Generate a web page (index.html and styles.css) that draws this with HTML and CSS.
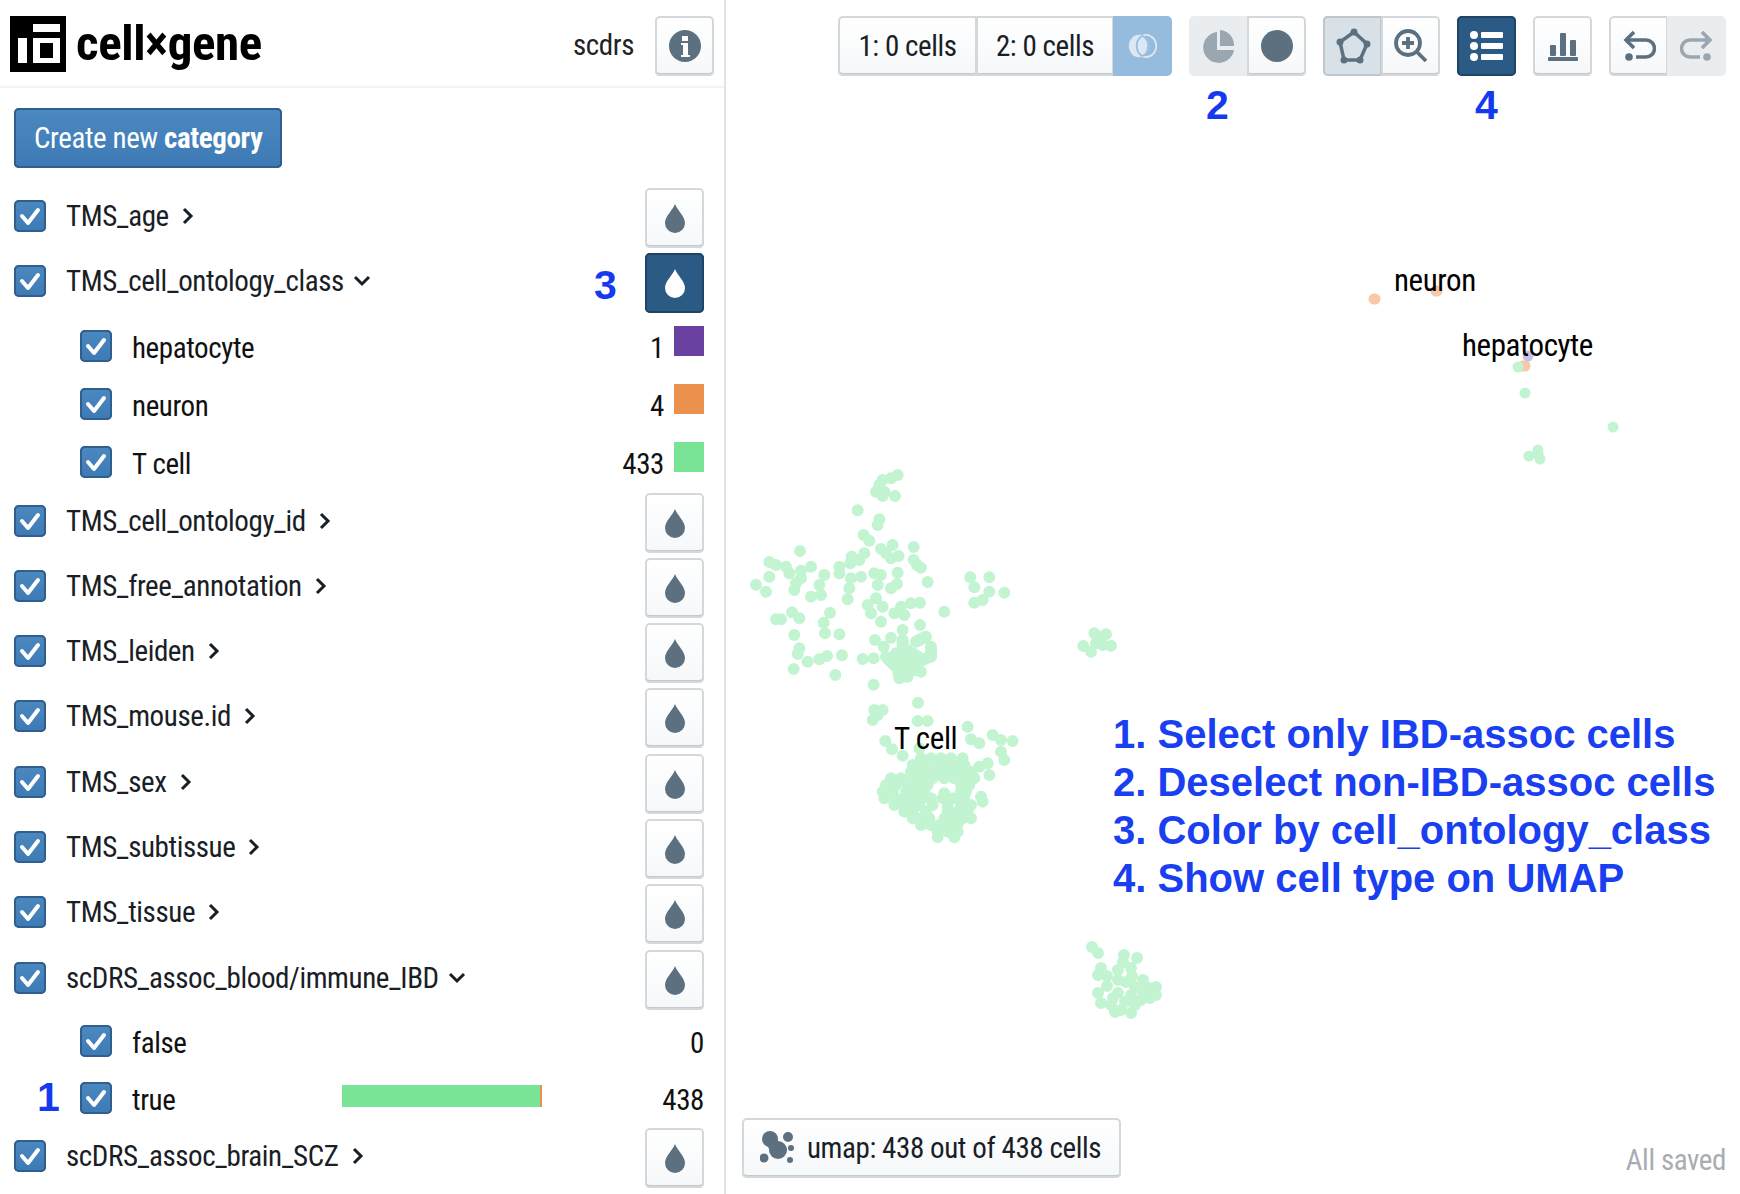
FILE: index.html
```html
<!DOCTYPE html>
<html>
<head>
    <title>cellxgene</title>
    <link rel="stylesheet" href="styles.css">
</head>
<body>
    <!-- Shared icons -->
    <svg class="icon-defs" width="0" height="0">
        <symbol id="drop" viewBox="0 0 20 30"><path d="M10 1C8 7 0 13 0 20a10 10 0 0 0 20 0C20 13 12 7 10 1z"/></symbol>
        <symbol id="tick" viewBox="0 0 32 32"><path d="M8 16l6 7L24 10" fill="none" stroke="#fff" stroke-width="4" stroke-linecap="round" stroke-linejoin="round"/></symbol>
        <symbol id="right" viewBox="0 0 14 20"><path d="M3 3l7 7-7 7" fill="none" stroke="#182026" stroke-width="3"/></symbol>
        <symbol id="down" viewBox="0 0 20 14"><path d="M3 3l7 7 7-7" fill="none" stroke="#182026" stroke-width="3"/></symbol>
    </svg>

    <!-- Left panel with categories -->
    <aside class="sidebar">
        <header class="brand">
            <svg class="logo" viewBox="0 0 56 56">
                <rect width="56" height="56" fill="#000"/>
                <path fill="#fff" fill-rule="evenodd" d="M23 8h27v8H23zM8 22h9v25H8zM23 22h27v25H23zM30 27v15h13V27z"/>
            </svg>
            <span class="wordmark">cell×gene</span>
            <span class="dataset">scdrs</span>
            <button class="btn btn-info">
                <svg width="34" height="34" viewBox="0 0 34 34"><circle cx="17" cy="17" r="16" fill="#5c7080"/><path fill="#fff" d="M14 7h6v5h-6zM13 14h7v12h2v2h-9v-2h2V16h-2z"/></svg>
            </button>
        </header>

        <div class="create-row">
            <button class="btn-create">Create new <b>category</b></button>
        </div>

        <div class="row group"><span class="check"><svg><use href="#tick"/></svg></span><span class="label">TMS_age</span><svg class="chev-r"><use href="#right"/></svg><button class="btn btn-drop"><svg><use href="#drop"/></svg></button></div>
        <div class="row group"><span class="check"><svg><use href="#tick"/></svg></span><span class="label">TMS_cell_ontology_class</span><svg class="chev-d"><use href="#down"/></svg><button class="btn btn-drop on"><svg><use href="#drop"/></svg></button></div>
        <div class="row child"><span class="check"><svg><use href="#tick"/></svg></span><span class="label">hepatocyte</span><span class="count">1</span><span class="swatch purple"></span></div>
        <div class="row child"><span class="check"><svg><use href="#tick"/></svg></span><span class="label">neuron</span><span class="count">4</span><span class="swatch orange"></span></div>
        <div class="row child"><span class="check"><svg><use href="#tick"/></svg></span><span class="label">T cell</span><span class="count">433</span><span class="swatch green"></span></div>
        <div class="row group"><span class="check"><svg><use href="#tick"/></svg></span><span class="label">TMS_cell_ontology_id</span><svg class="chev-r"><use href="#right"/></svg><button class="btn btn-drop"><svg><use href="#drop"/></svg></button></div>
        <div class="row group"><span class="check"><svg><use href="#tick"/></svg></span><span class="label">TMS_free_annotation</span><svg class="chev-r"><use href="#right"/></svg><button class="btn btn-drop"><svg><use href="#drop"/></svg></button></div>
        <div class="row group"><span class="check"><svg><use href="#tick"/></svg></span><span class="label">TMS_leiden</span><svg class="chev-r"><use href="#right"/></svg><button class="btn btn-drop"><svg><use href="#drop"/></svg></button></div>
        <div class="row group"><span class="check"><svg><use href="#tick"/></svg></span><span class="label">TMS_mouse.id</span><svg class="chev-r"><use href="#right"/></svg><button class="btn btn-drop"><svg><use href="#drop"/></svg></button></div>
        <div class="row group"><span class="check"><svg><use href="#tick"/></svg></span><span class="label">TMS_sex</span><svg class="chev-r"><use href="#right"/></svg><button class="btn btn-drop"><svg><use href="#drop"/></svg></button></div>
        <div class="row group"><span class="check"><svg><use href="#tick"/></svg></span><span class="label">TMS_subtissue</span><svg class="chev-r"><use href="#right"/></svg><button class="btn btn-drop"><svg><use href="#drop"/></svg></button></div>
        <div class="row group"><span class="check"><svg><use href="#tick"/></svg></span><span class="label">TMS_tissue</span><svg class="chev-r"><use href="#right"/></svg><button class="btn btn-drop"><svg><use href="#drop"/></svg></button></div>
        <div class="row group"><span class="check"><svg><use href="#tick"/></svg></span><span class="label">scDRS_assoc_blood/immune_IBD</span><svg class="chev-d"><use href="#down"/></svg><button class="btn btn-drop"><svg><use href="#drop"/></svg></button></div>
        <div class="row child short"><span class="check"><svg><use href="#tick"/></svg></span><span class="label">false</span><span class="count wide">0</span></div>
        <div class="row child short">
            <span class="check"><svg><use href="#tick"/></svg></span><span class="label">true</span>
            <span class="bar"><span class="bar-fill"></span></span>
            <span class="count wide">438</span>
            <span class="note note-1">1</span>
        </div>
        <div class="row group"><span class="check"><svg><use href="#tick"/></svg></span><span class="label">scDRS_assoc_brain_SCZ</span><svg class="chev-r"><use href="#right"/></svg><button class="btn btn-drop"><svg><use href="#drop"/></svg></button></div>

        <span class="note note-3">3</span>
    </aside>

    <!-- Graph panel -->
    <main class="graph">
        <svg class="scatter" viewBox="727 0 1013 1194" width="1013" height="1194">
            <g transform="translate(730 450) scale(.3333)" fill="none" stroke="#c3f4d2" stroke-width="36" stroke-linecap="round" stroke-linejoin="round">
                <!-- upper cloud -->
                <path d="M500 75h0M480 85h0M455 90h0M445 105h0M435 125h0M460 125h0M455 138h0M492 138h0M380 181h0M445 208h0M440 225h0M398 255h0M415 272h0M450 297h0M485 285h0M465 310h0M480 325h0M503 318h0M548 291h0M548 330h0M558 345h0M570 353h0M115 336h0M135 345h0M165 350h0M175 370h0M210 362h0M240 350h0M207 303h0M115 380h0M75 404h0M105 425h0M195 400h0M190 420h0M210 385h0M280 375h0M265 405h0M270 435h0M240 440h0M325 350h0M325 370h0M362 320h0M400 310h0M385 330h0M358 340h0M390 380h0M360 385h0M355 415h0M350 448h0M430 370h0M450 375h0M440 405h0M500 368h0M498 402h0M480 415h0M590 396h0M435 445h0M410 465h0M420 490h0M450 515h0M455 470h0M490 490h0M510 470h0M540 460h0M567 458h0M520 495h0M640 485h0M183 487h0M205 505h0M150 508h0M135 508h0M297 488h0M278 518h0M282 550h0M325 553h0M190 555h0M205 595h0M200 612h0M230 635h0M265 628h0M288 618h0M333 616h0M188 657h0M313 675h0M395 627h0M428 625h0M432 570h0M458 590h0M480 563h0M515 540h0M567 525h0"/>
                <path d="M515 570V680M495 610L505 685M530 600V680M570 665h0M465 620L495 650M545 640L600 620M585 560L555 575M600 590V620M575 630L545 610M560 660H530"/>
                <!-- side clusters -->
                <path d="M718 382h0M775 382h0M730 412h0M775 425h0M755 450h0M730 458h0M820 428h0M1057 588h0M1080 605h0M1090 550h0M1125 553h0M1095 580h0M1115 585h0M1140 587h0M1105 560h0"/>
                <!-- lower cloud -->
                <path d="M428 704h0M561 758h0M430 780h0M455 780h0M440 795h0M425 810h0M560 813h0M590 813h0M710 830h0M720 868h0M745 880h0M785 855h0M810 870h0M845 873h0M810 905h0M820 930h0M463 873h0M483 898h0M515 917h0M565 895h0M770 940h0M775 975h0M750 1040h0M755 1055h0"/>
                <path d="M570 925h0M600 925h0M630 925h0M660 925h0M695 925h0M545 945h0M575 945h0M610 945h0M640 945h0M670 945h0M700 945h0M745 950h0M540 965h0M570 965h0M600 965h0M630 965h0M660 965h0M690 965h0M720 965h0M480 985h0M510 985h0M545 985h0M575 985h0M605 985h0M640 985h0M670 985h0M705 985h0M730 985h0M465 1005h0M495 1005h0M530 1005h0M560 1005h0M590 1005h0M690 1005h0M715 1005h0M455 1025h0M485 1025h0M525 1025h0M555 1025h0M580 1025h0M640 1030h0M690 1025h0M705 1025h0M460 1045h0M495 1045h0M520 1045h0M550 1045h0M575 1045h0M600 1045h0M635 1045h0M665 1045h0M700 1045h0M490 1065h0M515 1065h0M545 1065h0M565 1065h0M605 1065h0M650 1070h0M690 1065h0M720 1065h0M520 1085h0M545 1085h0M585 1085h0M650 1085h0M680 1085h0M710 1085h0M545 1105h0M570 1105h0M595 1105h0M640 1105h0M670 1105h0M695 1105h0M720 1105h0M570 1125h0M600 1125h0M625 1125h0M650 1125h0M680 1125h0M620 1145h0M650 1145h0M680 1145h0M620 1162h0M670 1162h0"/>
            </g>
            <g fill="none" stroke-width="11" stroke-linecap="round">
                <path stroke="#f7c9a8" d="M1373 299h1M1435 291h1M1522 366h2"/>
                <path stroke="#c9c0e4" d="M1527 356h0"/>
                <path stroke="#c3f4d2" d="M1517 367h0M1524 393h0M1612 427h0M1537 450h0M1528 456h0M1539 459h0M1537 454h0"/>
                <path stroke="#c3f4d2" stroke-width="12" d="M1123 955h0M1136 958h0M1100 968h0M1117 970h0M1130 968h0M1117 980h0M1142 980h0M1155 987h0M1149 998h0M1130 995h0M1117 993h0M1097 993h0M1120 1010h0M1130 1013h0M1110 1005h0M1134 1005h0M1091 947h0M1097 953h0M1097 975h0M1134 987h0M1106 976h0M1125 982h0M1142 992h0M1112 998h0M1100 1003h0M1122 962h0M1131 976h0M1148 988h0M1106 986h0M1124 1002h0M1114 1012h0M1140 1000h0M1155 995h0"/>
            </g>
        </svg>

        <div class="toolbar">
            <div class="btn-group">
                <button class="btn btn-text">1: 0 cells</button>
                <button class="btn btn-text two">2: 0 cells</button>
                <button class="btn btn-tool venn">
                    <svg width="31" height="24" viewBox="0 0 34 28"><ellipse cx="13" cy="14" rx="12" ry="13" fill="#dbe8f3"/><ellipse cx="21" cy="14" rx="12" ry="13" fill="none" stroke="#dbe8f3" stroke-width="2"/><path d="M17 2a14 14 0 0 0 0 24" fill="none" stroke="#95bcdd" stroke-width="2"/><path d="M17 2a14 14 0 0 1 0 24" fill="none" stroke="#95bcdd" stroke-width="2"/></svg>
                </button>
            </div>
            <div class="btn-group">
                <button class="btn btn-tool off">
                    <svg width="32" height="34" viewBox="0 0 32 34"><path fill="#9aa7b0" d="M14 3v18h17a15.500 15.500 0 1 1-17-18z"/><path fill="#9aa7b0" d="M17 1a15 15 0 0 1 14 15v1H17z"/></svg>
                </button>
                <button class="btn btn-tool">
                    <svg width="34" height="34" viewBox="0 0 34 34"><circle cx="17" cy="17" r="16" fill="#5c7080"/></svg>
                </button>
            </div>
            <div class="btn-group">
                <button class="btn btn-tool pressed">
                    <svg width="36" height="36" viewBox="0 0 36 36"><path fill="none" stroke="#5c7080" stroke-width="3.500" d="M19 4l13 12-7 16H9L5 14z"/><g fill="#5c7080"><circle cx="19" cy="4" r="3.500"/><circle cx="32" cy="16" r="3.500"/><circle cx="25" cy="32" r="3.500"/><circle cx="9" cy="32" r="3.500"/><circle cx="5" cy="14" r="3.500"/></g></svg>
                </button>
                <button class="btn btn-tool">
                    <svg width="36" height="36" viewBox="0 0 36 36"><g fill="none" stroke="#5c7080" stroke-width="3.800"><circle cx="15" cy="15" r="12"/><path d="M24 24l9 9M15 9v12M9 15h12"/></g></svg>
                </button>
            </div>
            <button class="btn btn-tool on">
                <svg width="34" height="34" viewBox="0 0 34 34"><g fill="#fff"><circle cx="4" cy="6" r="4"/><circle cx="4" cy="17" r="4"/><circle cx="4" cy="28" r="4"/><rect x="11" y="3" width="22" height="6" rx="1"/><rect x="11" y="14" width="22" height="6" rx="1"/><rect x="11" y="25" width="22" height="6" rx="1"/></g></svg>
            </button>
            <button class="btn btn-tool">
                <svg width="32" height="32" viewBox="0 0 32 32"><g fill="#5c7080"><rect x="3" y="15" width="6" height="11" rx="1"/><rect x="13" y="3" width="6" height="23" rx="1"/><rect x="23" y="10" width="6" height="16" rx="1"/><rect x="1" y="27" width="30" height="4" rx="1"/></g></svg>
            </button>
            <div class="btn-group">
                <button class="btn btn-tool">
                    <svg width="34" height="34" viewBox="0 0 34 34"><path fill="none" stroke="#5c7080" stroke-width="3.600" d="M12 3L4 11l8 8M4 11h20a7 7 0 0 1 0 17H14"/><circle cx="7" cy="28" r="3.800" fill="#5c7080"/></svg>
                </button>
                <button class="btn btn-tool off">
                    <svg width="34" height="34" viewBox="0 0 34 34"><path fill="none" stroke="#9aa7b0" stroke-width="3.600" d="M22 3l8 8-8 8M30 11H10a7 7 0 0 0 0 17h10"/><circle cx="27" cy="28" r="3.800" fill="#9aa7b0"/></svg>
                </button>
            </div>
        </div>

        <span class="note note-2">2</span>
        <span class="note note-4">4</span>

        <span class="plot-label neuron">neuron</span>
        <span class="plot-label hepatocyte">hepatocyte</span>
        <span class="plot-label tcell">T cell</span>

        <ol class="steps">
            <li>1. Select only IBD-assoc cells</li>
            <li>2. Deselect non-IBD-assoc cells</li>
            <li>3. Color by cell_ontology_class</li>
            <li>4. Show cell type on UMAP</li>
        </ol>

        <div class="footer">
            <button class="btn btn-embed">
                <svg width="36" height="34" viewBox="0 0 36 34"><g fill="#5c7080"><circle cx="10" cy="8" r="8"/><circle cx="18" cy="19" r="9"/><circle cx="13" cy="13" r="6"/><circle cx="28" cy="6" r="5"/><circle cx="31" cy="17" r="3"/><circle cx="4" cy="27" r="4.500"/><circle cx="30" cy="29" r="3"/></g></svg>
                umap: 438 out of 438 cells
            </button>
            <span class="saved">All saved</span>
        </div>
    </main>
</body>
</html>
```

FILE: styles.css
```css
/* Page frame. The source text is set narrower than plain Roboto */
body {
    margin: 0;
    height: 1194px;
    overflow: hidden;
    display: flex;
    background: #fff;
    color: #111;
    font-family: Roboto, "Liberation Sans", sans-serif;
    font-stretch: 87%;
    font-size: 29px;
    letter-spacing: -0.4px;
}

.icon-defs {
    position: absolute;
}

/* Sidebar */
.sidebar {
    position: relative;
    width: 724px;
    flex: none;
    border-right: 2px solid #dfe4e8;
}

.brand {
    height: 88px;
    box-sizing: border-box;
    border-bottom: 2px solid #f3f4f5;
    display: flex;
    align-items: flex-start;
    padding: 16px 10px 0 10px;
}

.logo {
    width: 56px;
    height: 56px;
    flex: none;
}

.wordmark {
    margin-left: 10px;
    font-size: 49px;
    font-weight: 700;
    line-height: 56px;
    color: #000;
}

.dataset {
    margin-left: auto;
    margin-right: 21px;
    line-height: 58px;
    color: #222;
}

/* Blueprint style buttons */
button {
    font: inherit;
    font-stretch: inherit;
    letter-spacing: inherit;
    color: inherit;
    padding: 0;
    border: 0;
}

.btn {
    display: flex;
    align-items: center;
    justify-content: center;
    width: 59px;
    height: 60px;
    border-radius: 5px;
    background: linear-gradient(#fff, #f5f8fa);
    box-shadow: inset 0 0 0 2px #d5d8da, inset 0 -3px 0 #c6cacc;
    flex: none;
}

.btn svg {
    flex: none;
}

.btn-create {
    width: 268px;
    height: 60px;
    border-radius: 5px;
    background: linear-gradient(#4d89c0, #3d79b4);
    box-shadow: inset 0 0 0 2px #2e5f8e, inset 0 -2px 0 #2b5a85;
    color: #fff;
    text-align: left;
    padding-left: 20px;
}

.create-row {
    padding: 20px 14px 20px;
}

/* Category rows */
.row {
    position: relative;
    display: flex;
    align-items: center;
    padding: 0 20px 0 14px;
}

.group {
    height: 60px;
    margin-bottom: 5.3px;
}

.child {
    height: 58px;
    padding-left: 80px;
}

.child.short {
    height: 56.5px;
}

.check {
    width: 32px;
    height: 32px;
    margin-top: -4px;
    flex: none;
    border-radius: 5px;
    background: linear-gradient(#4d89c0, #3d79b4);
    box-shadow: inset 0 0 0 2px #2e5f8e;
}

.check svg {
    width: 32px;
    height: 32px;
    display: block;
}

.label {
    margin-left: 20px;
    line-height: 32px;
    margin-top: -4px;
    color: #182026;
}

.child .label {
    margin-top: 0;
    color: #111;
}

.chev-r,
.chev-d {
    width: 14px;
    height: 20px;
    margin: -4px 0 0 12px;
}

.chev-d {
    width: 20px;
    height: 14px;
    margin-left: 8px;
}

.btn-drop {
    position: absolute;
    right: 20px;
    top: 0;
}

.btn-drop svg {
    width: 20px;
    height: 30px;
    fill: #5c7080;
}

.btn-drop.on {
    background: #2b5a85;
    box-shadow: inset 0 0 0 2px #1f4566;
}

.btn-drop.on svg {
    fill: #fff;
}

.count {
    margin-left: auto;
    margin-right: 10px;
}

.count.wide {
    margin-right: 0;
}

.swatch {
    width: 30px;
    height: 30px;
    flex: none;
    margin-top: -14px;
}

.purple {
    background: #6a41a0;
}

.orange {
    background: #ec914d;
}

.green {
    background: #7ae496;
}

.bar {
    position: absolute;
    left: 342px;
    top: 14px;
    width: 200px;
    height: 22px;
    background: #ec914d;
}

.bar-fill {
    display: block;
    width: 198px;
    height: 22px;
    background: #7ae496;
}

/* Blue annotation numbers */
.note {
    position: absolute;
    font-family: "Liberation Sans", sans-serif;
    font-stretch: normal;
    letter-spacing: 0;
    font-weight: 700;
    font-size: 41px;
    line-height: 42px;
    color: #1539ef;
}

.note-1 {
    left: 37px;
    top: 5px;
}

.note-3 {
    left: 594px;
    top: 264px;
}

.note-2 {
    left: 480px;
    top: 84px;
}

.note-4 {
    left: 749px;
    top: 84px;
}

/* Graph panel */
.graph {
    position: relative;
    flex: 1;
}

.scatter {
    position: absolute;
    left: 2px;
    top: 0;
}

.toolbar {
    position: relative;
    display: flex;
    justify-content: flex-end;
    gap: 17px;
    padding: 16px 14px 0 0;
}

.btn-group {
    display: flex;
}

.btn-group .btn {
    border-radius: 0;
    margin-left: -1px;
}

.btn-group .btn:first-child {
    border-radius: 5px 0 0 5px;
    margin-left: 0;
}

.btn-group .btn:last-child {
    border-radius: 0 5px 5px 0;
}

.btn-text {
    width: 139px;
    box-sizing: border-box;
    color: #182026;
}

.btn-text.two {
    width: 138px;
}

.btn-tool.off {
    background: #e9edf0;
    box-shadow: none;
}

.btn-tool.pressed {
    background: #d8e1e8;
    box-shadow: inset 0 0 0 2px #c0c6ca, inset 0 2px 0 #b5bcc2;
}

.btn-tool.on {
    background: #2b5a85;
    box-shadow: inset 0 0 0 2px #1f4566;
}

.btn-tool.venn {
    background: #95bcdd;
    box-shadow: none;
}

.plot-label {
    position: absolute;
    color: #000;
    font-size: 31px;
    line-height: 32px;
}

.neuron {
    left: 668px;
    top: 265px;
}

.hepatocyte {
    left: 736px;
    top: 330px;
}

.tcell {
    left: 168px;
    top: 723px;
}

.steps {
    position: absolute;
    left: 387px;
    top: 710px;
    margin: 0;
    padding: 0;
    list-style: none;
    font-family: "Liberation Sans", sans-serif;
    font-stretch: normal;
    letter-spacing: 0;
    font-weight: 700;
    font-size: 40px;
    line-height: 48px;
    color: #1a3ff0;
    white-space: nowrap;
}

.footer {
    position: absolute;
    left: 16px;
    right: 14px;
    top: 1118px;
    display: flex;
    justify-content: space-between;
}

.btn-embed {
    width: 379px;
    justify-content: flex-start;
    padding-left: 18px;
    box-sizing: border-box;
    gap: 11px;
    color: #182026;
}

.saved {
    color: #a7adb2;
    margin-top: 26px;
    line-height: 32px;
}
```
